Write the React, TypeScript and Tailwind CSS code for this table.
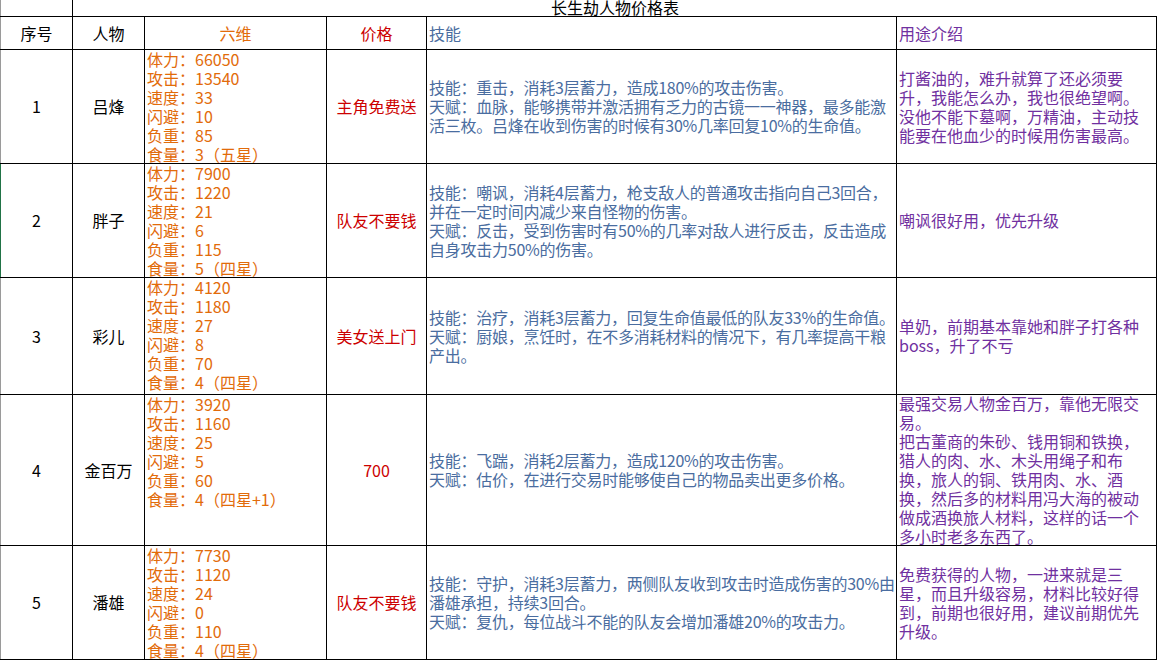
type Row = {
  no: string;
  name: string;
  stats: string[];
  price: string;
  skill: string[];
  usage: string[];
  h: string;
  edge: string;
};

const rows: Row[] = [
  {
    no: '1',
    name: '吕烽',
    stats: ['体力：66050', '攻击：13540', '速度：33', '闪避：10', '负重：85', '食量：3（五星）'],
    price: '主角免费送',
    skill: [
      '技能：重击，消耗3层蓄力，造成180%的攻击伤害。',
      '天赋：血脉，能够携带并激活拥有乏力的古镜一一神器，最多能激',
      '活三枚。吕烽在收到伤害的时候有30%几率回复10%的生命值。',
    ],
    usage: ['打酱油的，难升就算了还必须要', '升，我能怎么办，我也很绝望啊。', '没他不能下墓啊，万精油，主动技', '能要在他血少的时候用伤害最高。'],
    h: 'h-[114px]',
    edge: 'border-l-[#9a9a9a]',
  },
  {
    no: '2',
    name: '胖子',
    stats: ['体力：7900', '攻击：1220', '速度：21', '闪避：6', '负重：115', '食量：5（四星）'],
    price: '队友不要钱',
    skill: [
      '技能：嘲讽，消耗4层蓄力，枪支敌人的普通攻击指向自己3回合，',
      '并在一定时间内减少来自怪物的伤害。',
      '天赋：反击，受到伤害时有50%的几率对敌人进行反击，反击造成',
      '自身攻击力50%的伤害。',
    ],
    usage: ['嘲讽很好用，优先升级'],
    h: 'h-[114px]',
    edge: 'border-l-[#217346]',
  },
  {
    no: '3',
    name: '彩儿',
    stats: ['体力：4120', '攻击：1180', '速度：27', '闪避：8', '负重：70', '食量：4（四星）'],
    price: '美女送上门',
    skill: [
      '技能：治疗，消耗3层蓄力，回复生命值最低的队友33%的生命值。',
      '天赋：厨娘，烹饪时，在不多消耗材料的情况下，有几率提高干粮',
      '产出。',
    ],
    usage: ['单奶，前期基本靠她和胖子打各种', 'boss，升了不亏'],
    h: 'h-[117px]',
    edge: 'border-l-[#9a9a9a]',
  },
  {
    no: '4',
    name: '金百万',
    stats: ['体力：3920', '攻击：1160', '速度：25', '闪避：5', '负重：60', '食量：4（四星+1）'],
    price: '700',
    skill: ['技能：飞踹，消耗2层蓄力，造成120%的攻击伤害。', '天赋：估价，在进行交易时能够使自己的物品卖出更多价格。'],
    usage: [
      '最强交易人物金百万，靠他无限交',
      '易。',
      '把古董商的朱砂、钱用铜和铁换，',
      '猎人的肉、水、木头用绳子和布',
      '换，旅人的铜、铁用肉、水、酒',
      '换，然后多的材料用冯大海的被动',
      '做成酒换旅人材料，这样的话一个',
      '多小时老多东西了。',
    ],
    h: 'h-[151px]',
    edge: 'border-l-[#9a9a9a]',
  },
  {
    no: '5',
    name: '潘雄',
    stats: ['体力：7730', '攻击：1120', '速度：24', '闪避：0', '负重：110', '食量：4（四星）'],
    price: '队友不要钱',
    skill: [
      '技能：守护，消耗3层蓄力，两侧队友收到攻击时造成伤害的30%由',
      '潘雄承担，持续3回合。',
      '天赋：复仇，每位战斗不能的队友会增加潘雄20%的攻击力。',
    ],
    usage: ['免费获得的人物，一进来就是三', '星，而且升级容易，材料比较好得', '到，前期也很好用，建议前期优先', '升级。'],
    h: 'h-[114px]',
    edge: 'border-l-[#9a9a9a]',
  },
];

function Lines({ lines }: { lines: string[] }) {
  return (
    <div>
      {lines.map((l, i) => (
        <div key={i} className="whitespace-nowrap">
          {l}
        </div>
      ))}
    </div>
  );
}

export default function App() {
  return (
    <div
      className="w-[1157px] h-[660px] overflow-hidden bg-white text-[16px] leading-[19px] text-black"
      style={{ fontFamily: '"Noto Sans CJK SC", "Liberation Sans", sans-serif' }}
    >
      {/* Title row */}
      <div className="flex h-[17px] border-b border-black">
        <div className="w-[73px] shrink-0 border-r border-black border-l border-l-[#9a9a9a]" />
        <div className="flex-1 flex items-center justify-center leading-[16px] -mt-[2px]">长生劫人物价格表</div>
      </div>

      {/* Header row */}
      <div className="flex h-[33px] border-b border-black">
        <div className="w-[73px] shrink-0 flex items-center justify-center border-r border-black border-l border-l-[#9a9a9a]">序号</div>
        <div className="w-[72px] shrink-0 flex items-center justify-center border-r border-black">人物</div>
        <div className="w-[182px] shrink-0 flex items-center justify-center border-r border-black text-[#e26b0a]">六维</div>
        <div className="w-[100px] shrink-0 flex items-center justify-center border-r border-black text-[#cc0000]">价格</div>
        <div className="w-[470px] shrink-0 flex items-center pl-[2px] border-r border-black text-[#4a6da0]">技能</div>
        <div className="w-[260px] shrink-0 flex items-center pl-[2px] border-r border-black text-[#7030a0]">用途介绍</div>
      </div>

      {rows.map((r) => (
        <div key={r.no} className={`flex border-b border-black ${r.h}`}>
          <div className={`w-[73px] shrink-0 flex items-center justify-center border-r border-black border-l ${r.edge}`}>{r.no}</div>
          <div className="w-[72px] shrink-0 flex items-center justify-center border-r border-black">{r.name}</div>
          <div className="w-[182px] shrink-0 overflow-hidden pl-[2px] border-r border-black text-[#e26b0a]">
            <Lines lines={r.stats} />
          </div>
          <div className="w-[100px] shrink-0 flex items-center justify-center border-r border-black text-[#cc0000]">{r.price}</div>
          <div className="w-[470px] shrink-0 flex items-center overflow-hidden pl-[2px] border-r border-black text-[#4a6da0] tracking-[-0.25px]">
            <Lines lines={r.skill} />
          </div>
          <div className="w-[260px] shrink-0 flex items-center overflow-hidden pl-[2px] border-r border-black text-[#7030a0]">
            <Lines lines={r.usage} />
          </div>
        </div>
      ))}
    </div>
  );
}
